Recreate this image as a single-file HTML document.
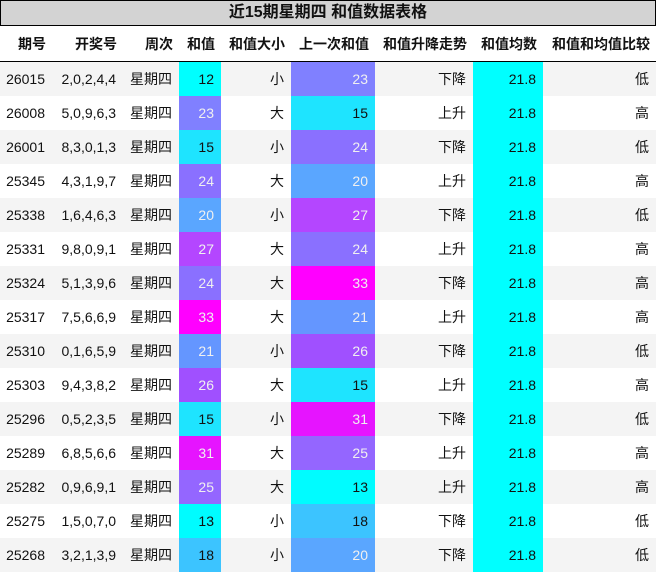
<!DOCTYPE html><html><head><meta charset="utf-8"><style>
body{margin:0;width:656px;height:573px;overflow:hidden;background:#fff;font-family:"Liberation Sans","Noto Sans CJK SC",sans-serif;font-size:14px;color:#111}
.t{position:absolute;left:0;top:0;width:654px;height:24px;background:#d3d3d3;border:1px solid #000;text-align:center;font-weight:bold;font-size:16px;line-height:24px}
table{position:absolute;top:26px;left:0;border-collapse:collapse;width:656px}
th{height:35px;font-weight:bold;text-align:right;padding:0 6px 0 0;border-bottom:1px solid #000;white-space:nowrap}
td{height:34px;padding:0 7px 0 0;text-align:right;white-space:nowrap}
#b tr:nth-child(odd) td{background:#f4f4f4}
</style></head><body>
<div class="t">近15期星期四 和值数据表格</div>
<table>
<colgroup><col style="width:52px"><col style="width:71px"><col style="width:56px"><col style="width:42px"><col style="width:70px"><col style="width:84px"><col style="width:98px"><col style="width:70px"><col style="width:113px"></colgroup>
<thead><tr><th>期号</th><th>开奖号</th><th>周次</th><th>和值</th><th>和值大小</th><th>上一次和值</th><th>和值升降走势</th><th>和值均数</th><th>和值和均值比较</th></tr></thead>
<tbody id="b"></tbody>
</table>
<script>
var d=[["26015","2,0,2,4,4",12,"小",23,"下降","低"],["26008","5,0,9,6,3",23,"大",15,"上升","高"],["26001","8,3,0,1,3",15,"小",24,"下降","低"],["25345","4,3,1,9,7",24,"大",20,"上升","高"],["25338","1,6,4,6,3",20,"小",27,"下降","低"],["25331","9,8,0,9,1",27,"大",24,"上升","高"],["25324","5,1,3,9,6",24,"大",33,"下降","高"],["25317","7,5,6,6,9",33,"大",21,"上升","高"],["25310","0,1,6,5,9",21,"小",26,"下降","低"],["25303","9,4,3,8,2",26,"大",15,"上升","高"],["25296","0,5,2,3,5",15,"小",31,"下降","低"],["25289","6,8,5,6,6",31,"大",25,"上升","高"],["25282","0,9,6,9,1",25,"大",13,"上升","高"],["25275","1,5,0,7,0",13,"小",18,"下降","低"],["25268","3,2,1,3,9",18,"小",20,"下降","低"]];
var C={12:"#00ffff",13:"#00fcff",15:"#1ee4ff",18:"#3cc4ff",20:"#5aa6ff",21:"#6496ff",23:"#8080ff",24:"#8a70ff",25:"#9466ff",26:"#a050ff",27:"#b446ff",31:"#e614ff",33:"#ff00ff"};
function c(v){var f=v<20?"#111":"#f0f0f0";return '<td style="background:'+C[v]+';color:'+f+'">'+v+'</td>'}
var h="";d.forEach(function(r){h+="<tr><td>"+r[0]+"</td><td>"+r[1]+"</td><td>星期四</td>"+c(r[2])+"<td>"+r[3]+"</td>"+c(r[4])+"<td>"+r[5]+'</td><td style="background:#00ffff">21.8</td><td>'+r[6]+"</td></tr>"});
document.getElementById("b").innerHTML=h;
</script>
</body></html>
